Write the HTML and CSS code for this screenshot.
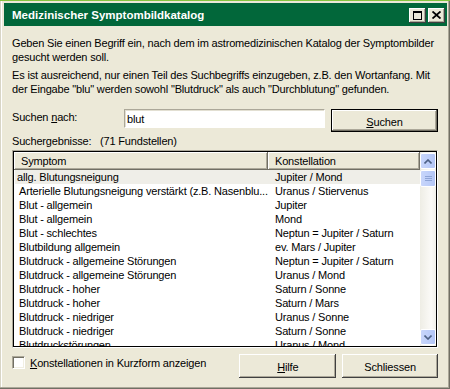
FILE: index.html
```html
<!DOCTYPE html>
<html lang="de">
<head>
<meta charset="utf-8">
<title>Medizinischer Symptombildkatalog</title>
<link rel="stylesheet" href="styles.css">
</head>
<body>
<div class="window">
  <div class="titlebar">
    <span class="title">Medizinischer Symptombildkatalog</span>
    <div class="tb-buttons">
      <span class="tb-btn"><svg width="9" height="9" viewBox="0 0 9 9"><rect x="0.5" y="0.5" width="8" height="8" fill="none" stroke="#000"/><rect x="0" y="0" width="9" height="2" fill="#000"/></svg></span>
      <span class="tb-btn"><svg width="9" height="8" viewBox="0 0 9 8"><path d="M0.5 0.5 L8.5 7.5 M8.5 0.5 L0.5 7.5" stroke="#000" stroke-width="1.8" fill="none"/></svg></span>
    </div>
  </div>
  <div class="content">
    <p class="intro">Geben Sie einen Begriff ein, nach dem im astromedizinischen Katalog der Symptombilder<br>gesucht werden soll.</p>
    <p class="intro second">Es ist ausreichend, nur einen Teil des Suchbegriffs einzugeben, z.B. den Wortanfang. Mit<br>der Eingabe "blu" werden sowohl "Blutdruck" als auch "Durchblutung" gefunden.</p>
    <div class="search-row">
      <span class="search-label">Suchen <u>n</u>ach:</span>
      <div class="field">blut</div>
      <div class="btn default"><span><u>S</u>uchen</span></div>
    </div>
    <div class="results-label"><span class="rl-title">Suchergebnisse:</span><span>(71 Fundstellen)</span></div>
    <div class="listbox">
      <div class="list-inner">
        <div class="list-main">
          <div class="list-header">
            <div class="hdr hdr1">Symptom</div>
            <div class="hdr hdr2">Konstellation</div>
          </div>
          <div class="rows">
            <div class="row first"><span class="c1">allg. Blutungsneigung</span><span class="c2">Jupiter / Mond</span></div>
            <div class="row"><span class="c1">Arterielle Blutungsneigung verstärkt (z.B. Nasenblu...</span><span class="c2">Uranus / Stiervenus</span></div>
            <div class="row"><span class="c1">Blut - allgemein</span><span class="c2">Jupiter</span></div>
            <div class="row"><span class="c1">Blut - allgemein</span><span class="c2">Mond</span></div>
            <div class="row"><span class="c1">Blut - schlechtes</span><span class="c2">Neptun = Jupiter / Saturn</span></div>
            <div class="row"><span class="c1">Blutbildung allgemein</span><span class="c2">ev. Mars / Jupiter</span></div>
            <div class="row"><span class="c1">Blutdruck - allgemeine Störungen</span><span class="c2">Neptun = Jupiter / Saturn</span></div>
            <div class="row"><span class="c1">Blutdruck - allgemeine Störungen</span><span class="c2">Uranus / Mond</span></div>
            <div class="row"><span class="c1">Blutdruck - hoher</span><span class="c2">Saturn / Sonne</span></div>
            <div class="row"><span class="c1">Blutdruck - hoher</span><span class="c2">Saturn / Mars</span></div>
            <div class="row"><span class="c1">Blutdruck - niedriger</span><span class="c2">Uranus / Sonne</span></div>
            <div class="row"><span class="c1">Blutdruck - niedriger</span><span class="c2">Saturn / Sonne</span></div>
            <div class="row"><span class="c1">Blutdruckstörungen</span><span class="c2">Uranus / Mond</span></div>
          </div>
        </div>
        <div class="scrollbar">
          <div class="sb-btn"><svg width="8" height="5" viewBox="0 0 8 5"><path d="M0.5 4.5 L4 1 L7.5 4.5" stroke="#4d6185" stroke-width="1.6" fill="none"/></svg></div>
          <div class="sb-thumb"><svg width="7" height="7" viewBox="0 0 7 7"><path d="M0 1.5 H7 M0 3.5 H7 M0 5.5 H7" stroke="#8ea4d6" stroke-width="1"/></svg></div>
          <div class="sb-track"></div>
          <div class="sb-btn"><svg width="8" height="5" viewBox="0 0 8 5"><path d="M0.5 0.5 L4 4 L7.5 0.5" stroke="#4d6185" stroke-width="1.6" fill="none"/></svg></div>
        </div>
      </div>
    </div>
    <div class="bottom-row">
      <span class="checkbox"></span>
      <span class="cb-label"><u>K</u>onstellationen in Kurzform anzeigen</span>
      <div class="btn help"><span><u>H</u>ilfe</span></div>
      <div class="btn close-btn"><span>Schliessen</span></div>
    </div>
  </div>
</div>
</body>
</html>
```

FILE: styles.css
```css
html, body {
  margin: 0;
  padding: 0;
}
body {
  font-family: "Liberation Sans", Arial, sans-serif;
  font-size: 11px;
  letter-spacing: -0.17px;
  color: #000;
  background: #ece9d8;
}
.window {
  width: 450px;
  height: 389px;
  box-sizing: border-box;
  background: #ece9d8;
  border-top: 1px solid #86c440;
  padding: 2px 3px 0 4px;
  display: flex;
  flex-direction: column;
  box-shadow: inset -1px -1px 0 #716f64, inset -2px -2px 0 #aca899, inset 1px 0 0 #d8d5c6, inset 2px 0 0 #fff;
}
.titlebar {
  height: 23px;
  background: #02673a;
  display: flex;
  align-items: center;
  padding: 0 2px 0 8px;
  flex-shrink: 0;
}
.title {
  color: #fff;
  font-weight: bold;
  font-size: 11.5px;
  letter-spacing: 0;
  flex: 1;
  padding-top: 1px;
}
.tb-buttons {
  display: flex;
  gap: 2px;
  padding-top: 1px;
}
.tb-btn {
  width: 17px;
  height: 15px;
  box-sizing: border-box;
  background: #ece9d8;
  display: flex;
  align-items: center;
  justify-content: center;
  box-shadow: inset -1px -1px 0 #404040, inset 1px 1px 0 #fff, inset -2px -2px 0 #aca899;
}
.content {
  padding: 10px 9px 0 8px;
  display: flex;
  flex-direction: column;
}
.intro {
  margin: 0;
  line-height: 14px;
  white-space: nowrap;
}
.intro.second {
  margin-top: 4px;
}
.search-row {
  display: flex;
  align-items: flex-start;
  margin-top: 13px;
  height: 23px;
}
.search-label {
  width: 112px;
  line-height: 14px;
  padding-top: 1px;
}
.field {
  width: 201px;
  height: 19px;
  box-sizing: border-box;
  background: #fff;
  border: 1px solid;
  border-color: #aca899 #fff #fff #aca899;
  box-shadow: inset 1px 1px 0 #e2dfd2;
  padding: 3px 0 0 2px;
  line-height: 13px;
}
.btn {
  box-sizing: border-box;
  background: #ece9d8;
  display: flex;
  align-items: center;
  justify-content: center;
  box-shadow: inset -1px -1px 0 #404040, inset 1px 1px 0 #fff, inset -2px -2px 0 #aca899;
}
.btn span {
  padding-top: 2px;
}
.btn.default {
  margin-left: 6px;
  width: 107px;
  height: 23px;
  border: 1px solid #000;
  box-shadow: inset -1px -1px 0 #716f64, inset 1px 1px 0 #fff, inset -2px -2px 0 #aca899;
}
.results-label {
  display: flex;
  margin-top: 2px;
  line-height: 14px;
}
.rl-title {
  width: 88px;
}
.listbox {
  margin-top: 2px;
  width: 426px;
  height: 198px;
  box-sizing: border-box;
  border: 1px solid;
  border-color: #aca899 #fff #fff #aca899;
}
.list-inner {
  height: 100%;
  box-sizing: border-box;
  border: 1px solid #000;
  background: #fff;
  display: flex;
  overflow: hidden;
}
.list-main {
  width: 406px;
  display: flex;
  flex-direction: column;
  overflow: hidden;
}
.list-header {
  display: flex;
  height: 18px;
  flex-shrink: 0;
}
.hdr {
  box-sizing: border-box;
  background: #ece9d8;
  height: 18px;
  line-height: 16px;
  padding-top: 1px;
  box-shadow: inset -1px -1px 0 #716f64, inset 1px 1px 0 #fff, inset -2px -2px 0 #aca899;
}
.hdr1 {
  width: 254px;
  padding-left: 7px;
}
.hdr2 {
  width: 152px;
  padding-left: 7px;
}
.rows {
  display: flex;
  flex-direction: column;
}
.row {
  display: flex;
  height: 14px;
  line-height: 14px;
  flex-shrink: 0;
  white-space: nowrap;
}
.row.first {
  background: #efeee8;
  margin-left: 1px;
}
.c1 {
  width: 254px;
  padding-left: 5px;
  box-sizing: border-box;
  overflow: hidden;
}
.row.first .c1 {
  width: 253px;
  padding-left: 2px;
}
.c2 {
  padding-left: 7px;
}
.scrollbar {
  width: 16px;
  display: flex;
  flex-direction: column;
  background: linear-gradient(to right, #eeede5, #fbfaf7 70%, #f1f0ea);
}
.sb-btn, .sb-thumb {
  height: 16px;
  margin: 1px 0 0 0;
  box-sizing: border-box;
  border: 1px solid #fff;
  border-radius: 2px;
  background: linear-gradient(to right, #c8d6fb, #bccdf9 60%, #b3c5f5);
  display: flex;
  align-items: center;
  justify-content: center;
  flex-shrink: 0;
}
.sb-thumb {
  height: 17px;
}
.sb-track {
  flex: 1;
}
.scrollbar .sb-btn:last-child {
  margin: 0 0 1px 0;
}
.bottom-row {
  display: flex;
  align-items: flex-start;
  margin-top: 6px;
}
.checkbox {
  width: 13px;
  height: 13px;
  box-sizing: border-box;
  background: #fff;
  margin-top: 2px;
  border: 1px solid;
  border-color: #aca899 #fff #fff #aca899;
  box-shadow: inset 1px 1px 0 #716f64, inset -1px -1px 0 #f1efe2;
}
.cb-label {
  margin-left: 5px;
  width: 210px;
  line-height: 14px;
  padding-top: 2px;
}
.btn.help {
  width: 97px;
  height: 24px;
}
.btn.close-btn {
  width: 96px;
  height: 24px;
  margin-left: 6px;
}
```
